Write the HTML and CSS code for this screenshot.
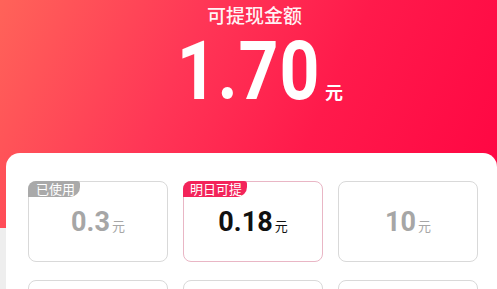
FILE: index.html
```html
<!DOCTYPE html>
<html lang="zh-CN">
<head>
<meta charset="utf-8">
<title>可提现金额</title>
<link rel="stylesheet" href="styles.css">
</head>
<body>
<div class="page">
  <header class="hero">
    <div class="hero-title">可提现金额</div>
    <div class="hero-amount">
      <span class="hero-num">1.70</span><span class="hero-unit">元</span>
    </div>
  </header>
  <section class="card">
    <div class="grid">
      <div class="cell">
        <span class="tag tag-used">已使用</span>
        <span class="num">0.3</span><span class="unit">元</span>
      </div>
      <div class="cell cell-active">
        <span class="tag tag-next">明日可提</span>
        <span class="num">0.18</span><span class="unit">元</span>
      </div>
      <div class="cell">
        <span class="num">10</span><span class="unit">元</span>
      </div>
      <div class="cell"></div>
      <div class="cell"></div>
      <div class="cell"></div>
    </div>
  </section>
</div>
</body>
</html>
```
FILE: styles.css
```css
html, body {
  margin: 0;
  padding: 0;
}
body {
  background: #eeeeee;
  font-family: "Noto Sans CJK SC", "Noto Sans", sans-serif;
  overflow: hidden;
}
.page {
  width: 497px;
  height: 289px;
  overflow: hidden;
}
.hero {
  height: 228px;
  background: linear-gradient(115deg, #ff6359 0%, #ff3656 35%, #ff1a4b 62%, #ff0442 100%);
  display: flex;
  flex-direction: column;
  align-items: center;
  color: #fff;
}
.hero-title {
  font-size: 19px;
  line-height: 30px;
  font-weight: 500;
  color: rgba(255, 255, 255, 0.94);
  padding-left: 12px;
}
.hero-amount {
  margin-top: 1px;
  display: flex;
  align-items: baseline;
  padding-left: 22px;
}
.hero-num {
  display: inline-block;
  font-family: Roboto, "Liberation Sans", sans-serif;
  font-weight: 700;
  font-size: 81px;
  line-height: 82px;
  letter-spacing: 1px;
  transform: scaleX(0.86);
  margin: 0 -11px;
}
.hero-unit {
  font-size: 18px;
  font-weight: 700;
  margin-left: 4px;
}
.card {
  margin: -75px 0 0 6px;
  width: 491px;
  height: 200px;
  background: #fff;
  border-radius: 14px 14px 0 0;
  padding: 28px 0 0 22px;
  box-sizing: border-box;
}
.grid {
  display: grid;
  grid-template-columns: repeat(3, 140px);
  grid-auto-rows: 81px;
  column-gap: 15px;
  row-gap: 18px;
}
.cell {
  position: relative;
  box-sizing: border-box;
  border: 1px solid #d9d9d9;
  border-radius: 8px;
  display: flex;
  align-items: baseline;
  justify-content: center;
  padding-top: 25px;
  color: #a6a6a6;
}
.cell-active {
  border-color: #e9b6c5;
  color: #111;
}
.num {
  font-family: Roboto, "Liberation Sans", sans-serif;
  font-weight: 700;
  font-size: 27px;
  line-height: 30px;
}
.unit {
  font-size: 13px;
  margin-left: 2px;
}
.tag {
  position: absolute;
  left: -1px;
  top: -1px;
  height: 16px;
  line-height: 16px;
  font-size: 13px;
  color: #fff;
  padding: 0 5px 0 8px;
  border-radius: 8px 3px 10px 0;
}
.tag-used {
  background: #a9a9a9;
}
.tag-next {
  background: #f3245a;
  padding: 0 5px 0 7px;
}
```
